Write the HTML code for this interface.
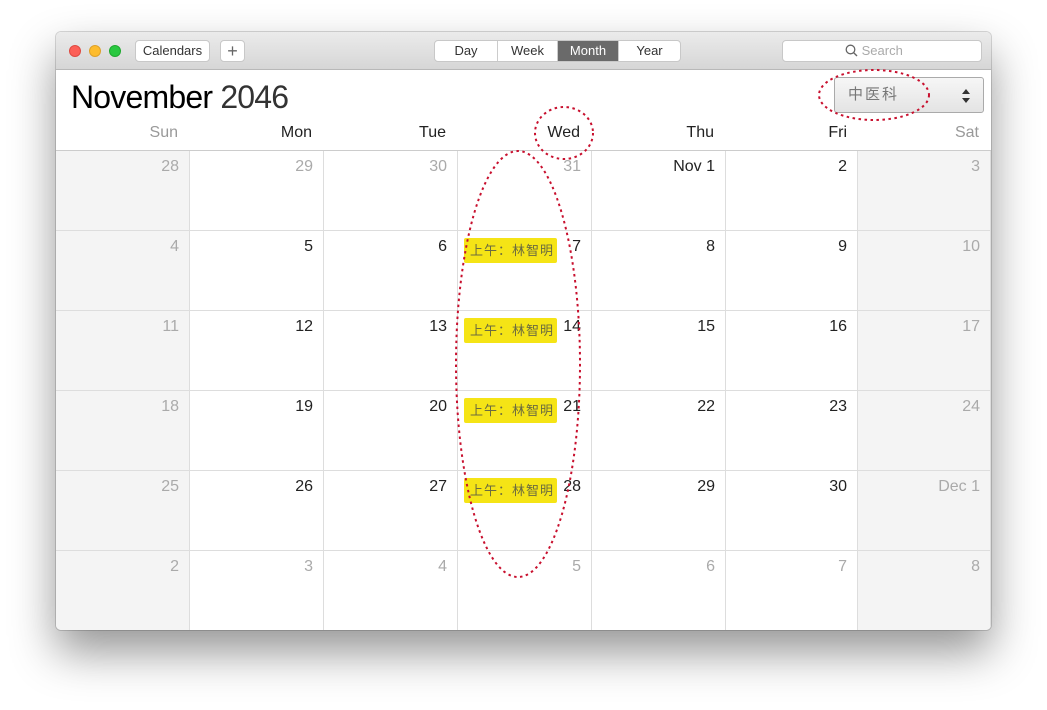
<!DOCTYPE html><html><head><meta charset="utf-8"><style>
*{margin:0;padding:0;box-sizing:border-box}
body{width:1047px;height:710px;background:#fff;position:relative;overflow:hidden;font-family:"Liberation Sans","Noto Sans CJK SC",sans-serif}
.win{position:absolute;left:56px;top:32px;width:935px;height:598px;background:#fff;border-radius:5px;box-shadow:0 22px 45px rgba(0,0,0,.42),0 0 0 1px rgba(0,0,0,.15);overflow:hidden}
.tb{position:absolute;left:0;top:0;width:935px;height:38px;background:linear-gradient(#ebebeb,#d6d6d6);border-bottom:1px solid #b8b8b8}
.dot{position:absolute;top:13px;width:12px;height:12px;border-radius:50%}
.btn{position:absolute;top:8px;height:22px;background:#fff;border:1px solid #c8c8c8;border-radius:4px;font-size:13px;color:#333;text-align:center;line-height:20px}
.seg{position:absolute;top:8px;left:378px;height:22px;display:flex;border:1px solid #c8c8c8;border-radius:4px;overflow:hidden;background:#fff}
.seg div{font-size:13px;color:#333;line-height:20px;text-align:center;border-right:1px solid #ccc}
.abs{position:absolute}
.dh{position:absolute;top:92px;font-size:16px;color:#222;text-align:right;width:120px}
.cell{position:absolute;width:134px;height:80px;border-right:1px solid #ddd;border-bottom:1px solid #ddd}
.n{position:absolute;right:10px;top:7px;font-size:16px;color:#222}
.g .n{color:#aaa}
.we{background:#f4f4f4}
.ev{position:absolute;left:408px;width:93px;height:25px;background:#f5e416;border-radius:2px;font-size:13px;color:#6b6b40;line-height:25px;padding-left:6px;letter-spacing:1px}
</style></head><body>
<div class="win">
<div class="tb">
<div class="dot" style="left:13px;background:#fc5f57;border:1px solid #de4a42"></div>
<div class="dot" style="left:33px;background:#fdbc2e;border:1px solid #dea12a"></div>
<div class="dot" style="left:53px;background:#29c840;border:1px solid #1fa92f"></div>
<div class="btn" style="left:79px;width:75px">Calendars</div>
<div class="btn" style="left:164px;width:25px;font-size:18px;color:#666">+</div>
<div class="seg"><div style="width:63px">Day</div><div style="width:60px">Week</div><div style="width:61px;background:#6a6a6a;color:#fff">Month</div><div style="width:61px;border:none">Year</div></div>
<div class="btn" style="left:726px;width:200px;color:#aaa;text-align:left;padding-left:62px"><svg width="13" height="13" style="vertical-align:-2px" viewBox="0 0 13 13"><circle cx="5.5" cy="5.5" r="4.3" fill="none" stroke="#666" stroke-width="1.3"/><line x1="8.6" y1="8.6" x2="12" y2="12" stroke="#666" stroke-width="1.4"/></svg> Search</div>
</div>
<div class="abs" style="left:15px;top:47px;font-size:32px;color:#000;letter-spacing:-.8px">November <span style="font-weight:300;color:#333">2046</span></div>
<div class="abs" style="left:778px;top:45px;width:150px;height:36px;border:1px solid #aaa;border-radius:3px;background:linear-gradient(#f6f6f6,#e4e4e4);font-size:15px;color:#777;line-height:34px;padding-left:13px;letter-spacing:2px">中医科<svg class="abs" style="right:12px;top:10px" width="10" height="16"><path d="M1 6L5 1L9 6Z M1 10L5 15L9 10Z" fill="#333"/></svg></div>
<div class="dh" style="left:2px;color:#999">Sun</div>
<div class="dh" style="left:136px">Mon</div>
<div class="dh" style="left:270px">Tue</div>
<div class="dh" style="left:404px">Wed</div>
<div class="dh" style="left:538px">Thu</div>
<div class="dh" style="left:671px">Fri</div>
<div class="dh" style="left:803px;color:#999">Sat</div>
<div class="abs" style="left:0;top:118px;width:935px;border-top:1px solid #ccc"></div>
<div id="grid"></div>
</div>
<svg class="abs" style="left:0;top:0" width="1047" height="710"><g fill="none" stroke="#c8102e" stroke-width="2" stroke-dasharray="2.5 3.5"><ellipse cx="564" cy="133" rx="29" ry="26"/><ellipse cx="518" cy="364" rx="62" ry="213"/><ellipse cx="874" cy="95" rx="55" ry="25"/></g></svg>
<script>
var d=[["28","29","30","31","Nov 1","2","3"],["4","5","6","7","8","9","10"],["11","12","13","14","15","16","17"],["18","19","20","21","22","23","24"],["25","26","27","28","29","30","Dec 1"],["2","3","4","5","6","7","8"]];
var xs=[0,134,268,402,536,669,802],h="";
for(var r=0;r<6;r++)for(var c=0;c<7;c++){var g=(r==0&&c<4)||(r==4&&c==6)||r==5||c==0||c==6;var w=c==6?133:(c==5?133:134);
h+='<div class="cell'+(g?' g':'')+((c==0||c==6)?' we':'')+'" style="left:'+xs[c]+'px;top:'+(119+r*80)+'px;width:'+w+'px"><div class="n">'+d[r][c]+'</div></div>';}
for(var r=1;r<5;r++)h+='<div class="ev" style="top:'+(206+(r-1)*80)+'px">上午：林智明</div>';
document.getElementById('grid').innerHTML=h;
</script>
</body></html>
